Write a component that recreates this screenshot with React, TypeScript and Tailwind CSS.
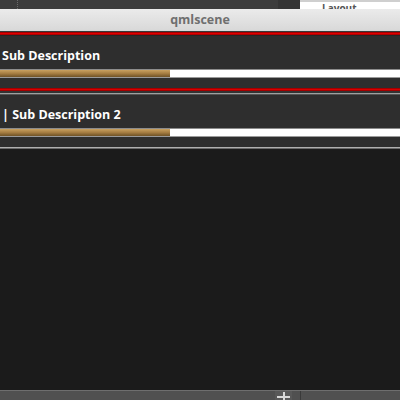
import React from 'react';

const ROWS = [
  { label: 'Sub Description', progress: 170, selected: true },
  { label: '| Sub Description 2', progress: 170, selected: false },
];

function ProgressBar({ width }: { width: number }) {
  return (
    <div className="flex h-[9px] flex-col">
      <div className="h-px bg-[#8c8c8c]" />
      <div className="flex h-[7px]">
        <div
          className="h-full bg-gradient-to-b from-[#c9a160] via-[#a57d42] to-[#6f5226]"
          style={{ width }}
        />
        <div className="h-full flex-1 bg-white" />
      </div>
      <div className="h-px bg-[#9a9a9a]" />
    </div>
  );
}

function Row({ label, progress }: { label: string; progress: number }) {
  return (
    <div className="flex h-[52px] flex-col bg-[#2e2e2e]">
      <div className="flex h-[33px] items-end pb-[7px] pl-[2px]">
        <span className="text-[12.5px] font-bold leading-none text-white">{label}</span>
      </div>
      <ProgressBar width={progress} />
      <div className="flex-1" />
    </div>
  );
}

export default function App() {
  return (
    <div
      className="flex h-[400px] w-[400px] flex-col overflow-hidden bg-[#1b1b1b]"
      style={{ fontFamily: '"Open Sans", "DejaVu Sans", sans-serif' }}
    >
      {/* desktop strip behind the window */}
      <div className="flex h-[9px]">
        <div className="relative w-[278px] bg-[#3c3c3c]">
          <div className="absolute left-[17px] top-0 h-full border-l border-dotted border-[#6a6a6a]" />
        </div>
        <div className="w-[22px] bg-[#343434]" />
        <div className="flex-1 overflow-hidden border-t-2 border-[#cfcfcf] bg-white pl-[22px]">
          <span className="block text-[10px] font-bold leading-[12px] text-[#555]">Layout</span>
        </div>
      </div>

      {/* title bar */}
      <div className="flex h-[22px] items-center justify-center bg-gradient-to-b from-[#ebebeb] to-[#d8d8d8]">
        <span className="text-[12.5px] font-bold text-[#6f6f6f]">qmlscene</span>
      </div>

      <div className="h-px bg-[#3a3a3a]" />
      <div className="h-[3px] bg-gradient-to-b from-[#8a0000] via-[#e00000] to-[#9a0000]" />
      <div className="h-px bg-[#262626]" />

      <Row label={ROWS[0].label} progress={ROWS[0].progress} />

      <div className="h-[3px] bg-gradient-to-b from-[#8a0000] via-[#d80000] to-[#8a0000]" />
      <div className="h-[2px] bg-[#333333]" />
      <div className="h-px bg-[#a0a0a0]" />
      <div className="h-px bg-[#555555]" />

      <Row label={ROWS[1].label} progress={ROWS[1].progress} />

      <div className="h-px bg-[#b0b0b0]" />
      <div className="h-px bg-[#6a6a6a]" />

      <div className="flex-1 bg-[#1b1b1b]" />

      {/* bottom toolbar */}
      <div className="h-px bg-[#6e6e6e]" />
      <div className="flex h-[9px] bg-[#505050]">
        <div className="w-[275px]" />
        <div className="relative w-[17px] bg-[#585858]">
          <div className="absolute left-[8px] top-[1px] h-[12px] w-[2px] bg-[#d8d8d8]" />
          <div className="absolute left-[2px] top-[5px] h-[2px] w-[13px] bg-[#d8d8d8]" />
        </div>
        <div className="w-[8px]" />
        <div className="w-px bg-[#3a3a3a]" />
        <div className="flex-1" />
      </div>
    </div>
  );
}
